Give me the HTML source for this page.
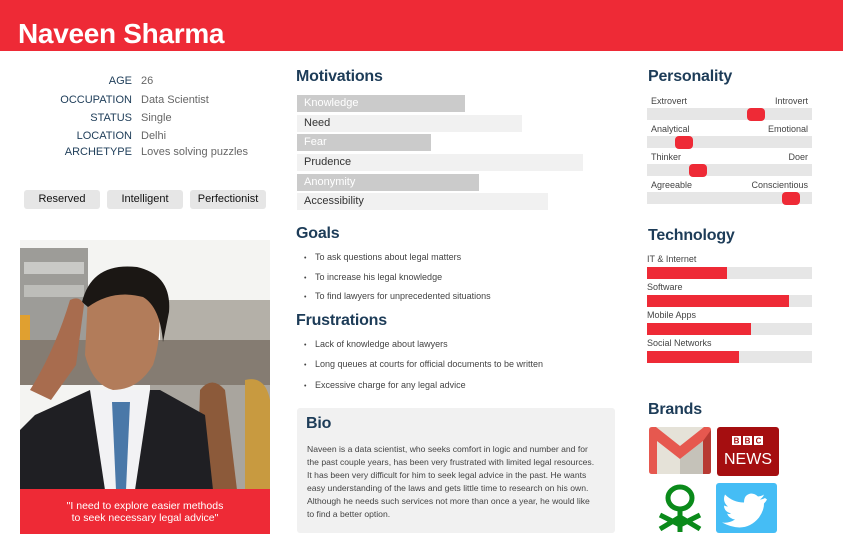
<!DOCTYPE html>
<html><head><meta charset="utf-8"><style>
*{margin:0;padding:0;box-sizing:border-box}
body{width:843px;height:548px;background:#fff;font-family:"Liberation Sans",sans-serif;position:relative;overflow:hidden;color:#444}
.a{position:absolute}
.hdr{left:0;top:0;width:843px;height:51px;background:#ee2a36}
.name{left:18px;top:18px;font-size:28px;font-weight:bold;color:#fff;letter-spacing:-0.3px}
.lbl{font-size:11px;color:#1d3c58;text-align:right;width:132px;left:0}
.val{font-size:11px;color:#666;left:141px}
.tag{height:19px;background:#e6e6e6;border-radius:3px;font-size:11px;color:#111;text-align:center;line-height:19px;top:190px}
h2{position:absolute;font-size:16px;font-weight:bold;color:#1d3c58;letter-spacing:-0.2px}
.mb{left:297px;height:17px;font-size:11px;line-height:17px;padding-left:7px}
.mb.d{background:#cbcbcb;color:#fff}.mb.l{background:#f1f1f1;color:#333}
.li{font-size:9px;color:#444;left:304px}
.li span{display:inline-block;width:11px;font-size:7px}
.pl{font-size:9px;color:#444}
.tr{left:647px;width:165px;height:12px;background:#e6e6e6}
.hd{height:13px;width:18px;background:#ee2a36;border-radius:4px}
.fl{height:12px;background:#ee2a36;left:647px}
</style></head><body>
<div class="a hdr"></div><div class="a name">Naveen Sharma</div>

<div class="a lbl" style="top:75px">AGE</div><div class="a val" style="top:75px">26</div>
<div class="a lbl" style="top:94px">OCCUPATION</div><div class="a val" style="top:94px">Data Scientist</div>
<div class="a lbl" style="top:112px">STATUS</div><div class="a val" style="top:112px">Single</div>
<div class="a lbl" style="top:130px">LOCATION</div><div class="a val" style="top:130px">Delhi</div>
<div class="a lbl" style="top:146px">ARCHETYPE</div><div class="a val" style="top:146px">Loves solving puzzles</div>

<div class="a tag" style="left:24px;width:76px">Reserved</div>
<div class="a tag" style="left:107px;width:76px">Intelligent</div>
<div class="a tag" style="left:190px;width:76px">Perfectionist</div>

<svg class="a" style="left:20px;top:240px" width="250" height="250" viewBox="0 0 250 250">
<rect width="250" height="250" fill="#f4f4f2"/>
<rect x="0" y="8" width="68" height="95" fill="#9d9c98"/>
<rect x="4" y="22" width="60" height="12" fill="#c9c9c6"/>
<rect x="4" y="45" width="60" height="12" fill="#bdbdb9"/>
<rect x="0" y="75" width="10" height="30" fill="#e0a030"/>
<rect x="140" y="60" width="110" height="50" fill="#b4b0a8"/>
<rect x="0" y="100" width="250" height="45" fill="#857c72"/>
<rect x="130" y="145" width="120" height="105" fill="#a9a59e"/>
<path d="M180 150 q12 -15 25 0 l12 100 h-40z" fill="#8c5a3a"/>
<path d="M225 140 q20 -5 25 20 v90 h-25z" fill="#c89a40"/>
<path d="M68 55 q35 -25 70 0 q5 40 -5 70 q-15 25 -40 25 q-20 -5 -28 -35z" fill="#b27c5a"/>
<path d="M62 62 q10 -40 55 -35 q35 8 32 45 l-6 30 q-3 -35 -20 -45 q-30 -8 -55 10z" fill="#1b1714"/>
<path d="M10 150 q25 -40 40 -90 q10 -5 14 5 l-8 60 l-25 35z" fill="#a86c4e"/>
<path d="M0 190 l15 -15 l55 -25 h70 l45 25 l8 75 h-193z" fill="#1f1f23"/>
<path d="M70 150 h60 l-15 100 h-30z" fill="#f2f2f4"/>
<path d="M92 162 h18 l-4 88 h-10z" fill="#4a78a8"/>
</svg>
<div class="a" style="left:20px;top:489px;width:250px;height:45px;background:#ee2a36;color:#fff;font-size:10.5px;text-align:center;line-height:12px;padding-top:11px">"I need to explore easier methods<br>to seek necessary legal advice"</div>

<h2 style="left:296px;top:68px">Motivations</h2>
<div class="a mb d" style="top:95px;width:168px">Knowledge</div>
<div class="a mb l" style="top:115px;width:225px">Need</div>
<div class="a mb d" style="top:134px;width:134px">Fear</div>
<div class="a mb l" style="top:154px;width:286px">Prudence</div>
<div class="a mb d" style="top:174px;width:182px">Anonymity</div>
<div class="a mb l" style="top:193px;width:251px">Accessibility</div>

<h2 style="left:296px;top:225px">Goals</h2>
<div class="a li" style="top:252px"><span>•</span>To ask questions about legal matters</div>
<div class="a li" style="top:272px"><span>•</span>To increase his legal knowledge</div>
<div class="a li" style="top:291px"><span>•</span>To find lawyers for unprecedented situations</div>
<h2 style="left:296px;top:312px">Frustrations</h2>
<div class="a li" style="top:339px"><span>•</span>Lack of knowledge about lawyers</div>
<div class="a li" style="top:359px"><span>•</span>Long queues at courts for official documents to be written</div>
<div class="a li" style="top:380px"><span>•</span>Excessive charge for any legal advice</div>

<div class="a" style="left:297px;top:408px;width:318px;height:125px;background:#f1f1f1;border-radius:3px"></div>
<h2 style="left:306px;top:415px">Bio</h2>
<div class="a" style="left:307px;top:443px;width:290px;font-size:8.6px;line-height:13px;color:#444">Naveen is a data scientist, who seeks comfort in logic and number and for the past couple years, has been very frustrated with limited legal resources. It has been very difficult for him to seek legal advice in the past. He wants easy understanding of the laws and gets little time to research on his own. Although he needs such services not more than once a year, he would like to find a better option.</div>

<h2 style="left:648px;top:68px">Personality</h2>
<div class="a pl" style="left:651px;top:96px">Extrovert</div><div class="a pl" style="left:760px;top:96px;width:48px;text-align:right">Introvert</div>
<div class="a tr" style="top:108px"></div><div class="a hd" style="left:747px;top:108px"></div>
<div class="a pl" style="left:651px;top:124px">Analytical</div><div class="a pl" style="left:740px;top:124px;width:68px;text-align:right">Emotional</div>
<div class="a tr" style="top:136px"></div><div class="a hd" style="left:675px;top:136px"></div>
<div class="a pl" style="left:651px;top:152px">Thinker</div><div class="a pl" style="left:760px;top:152px;width:48px;text-align:right">Doer</div>
<div class="a tr" style="top:164px"></div><div class="a hd" style="left:689px;top:164px"></div>
<div class="a pl" style="left:651px;top:180px">Agreeable</div><div class="a pl" style="left:730px;top:180px;width:78px;text-align:right">Conscientious</div>
<div class="a tr" style="top:192px"></div><div class="a hd" style="left:782px;top:192px"></div>

<h2 style="left:648px;top:227px">Technology</h2>
<div class="a pl" style="left:647px;top:254px">IT &amp; Internet</div>
<div class="a tr" style="top:267px"></div><div class="a fl" style="top:267px;width:80px"></div>
<div class="a pl" style="left:647px;top:282px">Software</div>
<div class="a tr" style="top:295px"></div><div class="a fl" style="top:295px;width:142px"></div>
<div class="a pl" style="left:647px;top:310px">Mobile Apps</div>
<div class="a tr" style="top:323px"></div><div class="a fl" style="top:323px;width:104px"></div>
<div class="a pl" style="left:647px;top:338px">Social Networks</div>
<div class="a tr" style="top:351px"></div><div class="a fl" style="top:351px;width:92px"></div>

<h2 style="left:648px;top:401px">Brands</h2>
<svg class="a" style="left:649px;top:427px" width="62" height="47" viewBox="0 0 62 47">
<rect width="62" height="47" rx="3" fill="#e5e2d8"/>
<path d="M0 3 v41 q0 3 3 3 h5 v-33 l23 18 23 -18 v33 h5 q3 0 3 -3 v-41 q0 -3 -3 -3 h-4 l-24 19 -24 -19 h-4 q-3 0 -3 3z" fill="#e6584f"/>
<path d="M31 32 l23 -18 v33 h-23z" fill="#b8b5ad" opacity=".7"/>
<path d="M54 14 v33 h5 q3 0 3 -3 v-41z" fill="#b73a33"/>
</svg>
<svg class="a" style="left:717px;top:427px" width="62" height="49" viewBox="0 0 62 49">
<rect width="62" height="49" rx="3" fill="#a50e10"/>
<rect x="15" y="9" width="9" height="9" fill="#fff"/><rect x="26" y="9" width="9" height="9" fill="#fff"/><rect x="37" y="9" width="9" height="9" fill="#fff"/>
<text x="19.5" y="16.5" font-size="8" font-weight="bold" fill="#a50e10" text-anchor="middle" font-family="Liberation Sans">B</text>
<text x="30.5" y="16.5" font-size="8" font-weight="bold" fill="#a50e10" text-anchor="middle" font-family="Liberation Sans">B</text>
<text x="41.5" y="16.5" font-size="8" font-weight="bold" fill="#a50e10" text-anchor="middle" font-family="Liberation Sans">C</text>
<text x="31" y="37" font-size="16" fill="#fff" text-anchor="middle" font-family="Liberation Sans">NEWS</text>
</svg>
<svg class="a" style="left:655px;top:483px" width="50" height="50" viewBox="0 0 50 50">
<g fill="none" stroke="#0a8a1a" stroke-width="5">
<ellipse cx="25" cy="15" rx="12" ry="11"/>
<path d="M25 27 v22 M25 34 l-20 12 M25 34 l20 12 M5 32 l20 10 M45 32 l-20 10"/>
</g></svg>
<svg class="a" style="left:716px;top:483px" width="61" height="50" viewBox="0 0 61 50">
<rect width="61" height="50" rx="3" fill="#45bdf5"/>
<path d="M49 15 q-3 1.5 -5 1.5 q3 -2 4 -5 q-3 2 -6 2 q-3 -3 -7 -3 q-7 1 -7 9 q-11 0 -19 -8 q-3 7 3 12 q-2 0 -4 -1 q0 6 7 8 q-2 1 -4 0 q2 5 8 6 q-6 4 -13 3 q23 12 37 -5 q5 -7 5 -14 q2 -2 3 -4z" fill="#fff"/>
</svg>
</body></html>
